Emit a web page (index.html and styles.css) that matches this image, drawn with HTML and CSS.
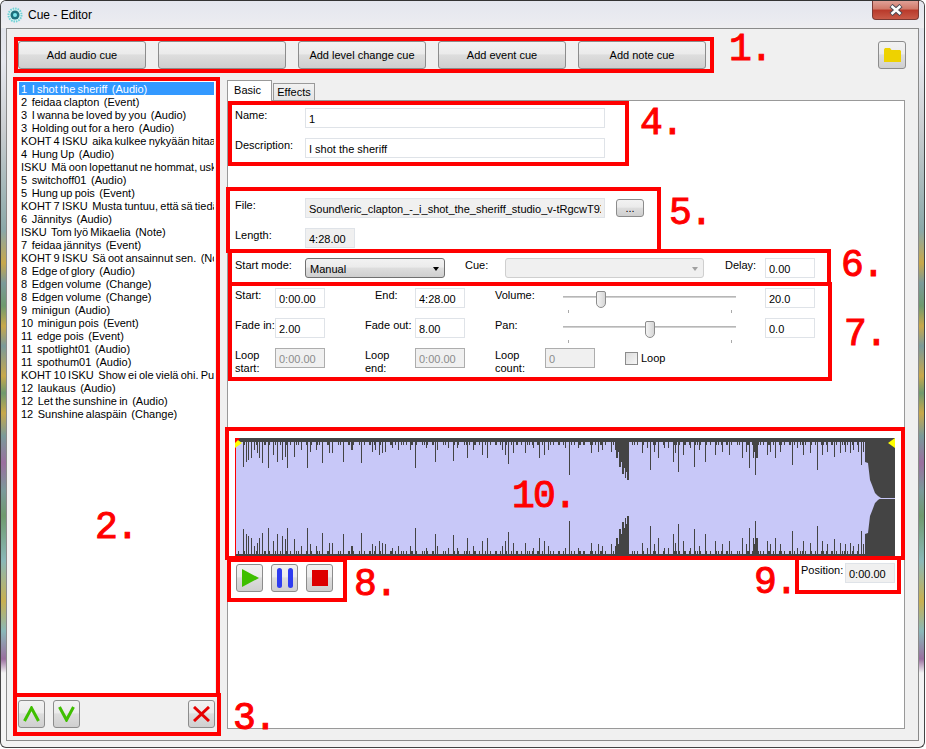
FILE: index.html
```html
<!DOCTYPE html>
<html lang="en">
<head>
  <meta charset="UTF-8">
  <title>Cue - Editor</title>
  <link rel="stylesheet" href="styles.css">
</head>
<body>
<div class="window">
  <div class="titlebar">
    <svg class="app-icon" width="16" height="16" viewBox="0 0 16 16">
      <circle cx="8" cy="8" r="6.5" fill="#d8f4f4" stroke="#6fd0d4" stroke-width="2" stroke-dasharray="1.5 1"/>
      <circle cx="8" cy="8" r="4.5" fill="#1f6f7c"/>
      <circle cx="8" cy="8" r="2" fill="#7fe8ee"/>
    </svg>
    <span class="title-text">Cue - Editor</span>
    <div class="close-btn">
      <svg width="16" height="12" viewBox="0 0 16 12">
        <path d="M3 1.5 13 10.5M13 1.5 3 10.5" stroke="#4a4a55" stroke-width="4.5"/>
        <path d="M3.5 2 12.5 10M12.5 2 3.5 10" stroke="#fff" stroke-width="2.5"/>
      </svg>
    </div>
  </div>

  <div class="client">
    <!-- Toolbar -->
    <div class="toolbar">
      <button class="btn btn-wide">Add audio cue</button>
      <button class="btn btn-wide"></button>
      <button class="btn btn-wide">Add level change cue</button>
      <button class="btn btn-wide">Add event cue</button>
      <button class="btn btn-wide">Add note cue</button>
      <button class="btn btn-folder">
        <svg width="17" height="14" viewBox="0 0 17 14"><path d="M0 1.5 1 0H6L7.5 2H16L17 3V14H0Z" fill="#eed200"/></svg>
      </button>
    </div>

    <div class="main">
      <!-- Cue list -->
      <div class="side">
        <div class="cue-list">
          <div class="cue cue-selected">1  I shot the sheriff  (Audio)</div>
          <div class="cue">2  feidaa clapton  (Event)</div>
          <div class="cue">3  I wanna be loved by you  (Audio)</div>
          <div class="cue">3  Holding out for a hero  (Audio)</div>
          <div class="cue">KOHT 4 ISKU  aika kulkee nykyään hitaammin  (Note)</div>
          <div class="cue">4  Hung Up  (Audio)</div>
          <div class="cue">ISKU  Mä oon lopettanut ne hommat, uskokaa  (Note)</div>
          <div class="cue">5  switchoff01  (Audio)</div>
          <div class="cue">5  Hung up pois  (Event)</div>
          <div class="cue">KOHT 7 ISKU  Musta tuntuu, että sä tiedät  (Note)</div>
          <div class="cue">6  Jännitys  (Audio)</div>
          <div class="cue">ISKU  Tom lyö Mikaelia  (Note)</div>
          <div class="cue">7  feidaa jännitys  (Event)</div>
          <div class="cue">KOHT 9 ISKU  Sä oot ansainnut sen.  (Note)</div>
          <div class="cue">8  Edge of glory  (Audio)</div>
          <div class="cue">8  Edgen volume  (Change)</div>
          <div class="cue">8  Edgen volume  (Change)</div>
          <div class="cue">9  minigun  (Audio)</div>
          <div class="cue">10  minigun pois  (Event)</div>
          <div class="cue">11  edge pois  (Event)</div>
          <div class="cue">11  spotlight01  (Audio)</div>
          <div class="cue">11  spothum01  (Audio)</div>
          <div class="cue">KOHT 10 ISKU  Show ei ole vielä ohi. Pukekaa  (Note)</div>
          <div class="cue">12  laukaus  (Audio)</div>
          <div class="cue">12  Let the sunshine in  (Audio)</div>
          <div class="cue">12  Sunshine alaspäin  (Change)</div>
        </div>
        <div class="list-buttons">
          <button class="btn btn-icon">
            <svg width="17" height="16" viewBox="0 0 17 16"><path d="M1.5 15 8.5 2 15.5 15" fill="none" stroke="#3fbf00" stroke-width="3"/></svg>
          </button>
          <button class="btn btn-icon">
            <svg width="17" height="16" viewBox="0 0 17 16"><path d="M1.5 1 8.5 14 15.5 1" fill="none" stroke="#3fbf00" stroke-width="3"/></svg>
          </button>
          <button class="btn btn-icon btn-delete">
            <svg width="17" height="16" viewBox="0 0 17 16"><path d="M1 1 16 15M16 1 1 15" stroke="#e60000" stroke-width="3"/></svg>
          </button>
        </div>
      </div>

      <!-- Tabs -->
      <div class="tabs">
        <div class="tab-strip">
          <div class="tab tab-active">Basic</div>
          <div class="tab">Effects</div>
        </div>
        <div class="tab-panel">
          <div class="rows rows-basic">
            <div class="row"><label class="lbl lbl-70">Name:</label><input class="field field-300" value="1"></div>
            <div class="row"><label class="lbl lbl-70">Description:</label><input class="field field-300" value="I shot the sheriff"></div>
          </div>

          <div class="rows rows-file">
            <div class="row">
              <label class="lbl lbl-70">File:</label>
              <input class="field field-300 field-ro" readonly value="Sound\eric_clapton_-_i_shot_the_sheriff_studio_v-tRgcwT9XZ.mp3">
              <button class="btn btn-browse">...</button>
            </div>
            <div class="row"><label class="lbl lbl-70">Length:</label><input class="field field-50 field-ro" readonly value="4:28.00"></div>
          </div>

          <div class="row row-start">
            <label class="lbl lbl-70">Start mode:</label>
            <div class="combo combo-mode">Manual</div>
            <label class="lbl lbl-cue">Cue:</label>
            <div class="combo combo-cue"></div>
            <label class="lbl lbl-delay">Delay:</label>
            <input class="field field-50" value="0.00">
          </div>

          <div class="timing">
            <label class="lbl">Start:</label>
            <input class="field" value="0:00.00">
            <label class="lbl col-label2 lbl-end">End:</label>
            <input class="field" value="4:28.00">
            <label class="lbl col-label3">Volume:</label>
            <div class="slider"><span class="thumb thumb-vol"></span></div>
            <input class="field col-value" value="20.0">

            <label class="lbl">Fade in:</label>
            <input class="field" value="2.00">
            <label class="lbl col-label2">Fade out:</label>
            <input class="field" value="8.00">
            <label class="lbl col-label3">Pan:</label>
            <div class="slider"><span class="thumb thumb-pan"></span></div>
            <input class="field col-value" value="0.0">

            <label class="lbl">Loop<br>start:</label>
            <input class="field field-off" disabled value="0:00.00">
            <label class="lbl col-label2">Loop<br>end:</label>
            <input class="field field-off" disabled value="0:00.00">
            <label class="lbl col-label3">Loop<br>count:</label>
            <input class="field field-off" disabled value="0">
            <label class="check"><span class="check-box"></span>Loop</label>
          </div>

          <!-- Waveform -->
          <svg class="wave" width="660" height="119" viewBox="0 0 660 119">
            <defs>
              <g id="half">
                <rect x="0" y="0" width="660" height="4" fill="#444"/>
                <path d="M0 5.5H630" stroke="#444" stroke-width="3" stroke-dasharray="1 2 1 4 2 3 1 5 1 1"/>
                <path d="M380 0V12H381V20H383V14H384V29H386V24H387V36H389V30H390V40H391V34H392V42H394V0ZM518 0V20H519V14H520V37H521V20H523V0ZM630 0V24L633 25 635 42 637 47 640 55 643 58 646 60H660V0Z" fill="#444"/>
                <path fill="none" stroke="#444" d="M8.5 0V29M11.5 0V24M13.5 0V22M16.5 0V20M19.5 0V12M22.5 0V15M24.5 0V20M27.5 0V25M33.5 0V30M38.5 0V17M42.5 0V24M47.5 0V22M50.5 0V19M52.5 0V30M59.5 0V19M66.5 0V12M72.5 0V30M75.5 0V14M81.5 0V12M87.5 0V25M94.5 0V15M97.5 0V15M108.5 0V24M116.5 0V12M117.5 0V12M126.5 0V25M137.5 0V14M140.5 0V12M144.5 0V17M147.5 0V15M150.5 0V14M157.5 0V10M163.5 0V12M175.5 0V12M180.5 0V30M191.5 0V10M200.5 0V24M202.5 0V12M213.5 0V10M218.5 0V23M222.5 0V10M232.5 0V20M238.5 0V12M247.5 0V17M252.5 0V20M267.5 0V12M270.5 0V17M273.5 0V26M278.5 0V15M290.5 0V15M298.5 0V10M304.5 0V20M309.5 0V17M313.5 0V12M330.5 0V10M334.5 0V37M343.5 0V10M348.5 0V7M356.5 0V15M363.5 0V14M367.5 0V12M376.5 0V14M407.5 0V15M412.5 0V10M415.5 0V32M419.5 0V14M423.5 0V20M429.5 0V10M433.5 0V10M438.5 0V24M440.5 0V15M443.5 0V34M448.5 0V17M455.5 0V10M459.5 0V29M464.5 0V12M470.5 0V24M480.5 0V17M487.5 0V14M494.5 0V17M507.5 0V20M511.5 0V14M514.5 0V30M532.5 0V17M535.5 0V14M540.5 0V20M545.5 0V14M557.5 0V27M562.5 0V10M568.5 0V17M575.5 0V15M582.5 0V32M587.5 0V17M592.5 0V14M599.5 0V19M605.5 0V15M610.5 0V14M615.5 0V15M618.5 0V12M623.5 0V14M626.5 0V27M628.5 0V14"/>
              </g>
            </defs>
            <use href="#half"/>
            <use href="#half" transform="matrix(1 0 0 -1 0 120)"/>
            <path d="M644 60.5H660" stroke="#c8c8f8"/>
            <path d="M.5 0V119" stroke="#f00"/>
            <path d="M0 0 7 5 0 10Z" fill="#ff0"/>
            <path d="M0 0H5L0 5Z" fill="#f00"/>
            <path d="M653 5 660 0V10Z" fill="#ff0"/>
          </svg>

          <!-- Transport and position -->
          <div class="transport">
            <button class="btn btn-icon btn-play">
              <svg width="17" height="18" viewBox="0 0 17 18"><path d="M0 0 17 9 0 18Z" fill="#3fbf00"/></svg>
            </button>
            <button class="btn btn-icon">
              <svg width="16" height="20" viewBox="0 0 16 20"><rect x="0" width="5" height="20" rx="2.5" fill="#2e3cf0"/><rect x="11" width="5" height="20" rx="2.5" fill="#2e3cf0"/></svg>
            </button>
            <button class="btn btn-icon">
              <svg width="16" height="16" viewBox="0 0 16 16"><rect width="16" height="16" fill="#dd0000"/></svg>
            </button>
            <div class="position">
              <label class="lbl lbl-pos">Position:</label>
              <input class="field field-50 field-ro field-time" readonly value="0:00.00">
            </div>
          </div>
        </div>
      </div>
    </div>
  </div>
</div>

<!-- Red annotations drawn on top of the screenshot -->
<div class="box box-1"></div>
<div class="box box-2"></div>
<div class="box box-3"></div>
<div class="box box-4"></div>
<div class="box box-5"></div>
<div class="box box-6"></div>
<div class="box box-7"></div>
<div class="box box-8"></div>
<div class="box box-9"></div>
<div class="box box-10"></div>
<span class="num num-1">1.</span>
<span class="num num-2">2.</span>
<span class="num num-3">3.</span>
<span class="num num-4">4.</span>
<span class="num num-5">5.</span>
<span class="num num-6">6.</span>
<span class="num num-7">7.</span>
<span class="num num-8">8.</span>
<span class="num num-9">9.</span>
<span class="num num-10">10.</span>
</body>
</html>
```
FILE: styles.css
```css
* {
  box-sizing: border-box;
}

body {
  margin: 0;
  width: 926px;
  height: 749px;
  position: relative;
  overflow: hidden;
  background-color: #fff;
  font-family: "Liberation Sans", Arial, sans-serif;
  font-size: 11px;
  color: #000;
}

/* Window frame, the desktop shows through it as coloured bands */
.window {
  width: 925px;
  height: 748px;
  border: 1px solid #444;
  border-top-color: #333;
  border-radius: 6px;
  display: flex;
  flex-direction: column;
  background: linear-gradient(to bottom,
    #dfe2ea 0, #e6e8ee 60px, #c9cdd0 130px, #8aa8a8 230px, #c8a84a 262px, #7a9a9a 282px,
    #6f9a6e 305px, #c8a84a 325px, #7a9a9a 345px, #c8a84a 375px, #6f9a6e 392px, #c8a84a 412px,
    #7a9a9a 435px, #9a6f9f 462px, #7a9a9a 490px, #6f9a6e 515px, #8ab8b8 560px, #c8b050 600px,
    #8ab8b8 630px, #9a6f9f 658px, #f3f3f3 672px, #f3f3f3 100%);
}

.titlebar {
  height: 27px;
  flex-shrink: 0;
  display: flex;
  align-items: flex-start;
  padding-left: 6px;
  background: linear-gradient(to bottom, #e4e6ee, #eaebf0 70%, #eeeef0);
  border-radius: 5px 5px 0 0;
}

.app-icon {
  margin-top: 6px;
}

.title-text {
  margin-left: 5px;
  margin-top: 7px;
  font-size: 12px;
  line-height: 14px;
}

.close-btn {
  width: 47px;
  height: 19px;
  margin-left: auto;
  margin-right: 5px;
  display: flex;
  align-items: center;
  justify-content: center;
  border: 1px solid #7a3a34;
  border-top: none;
  border-radius: 0 0 4px 4px;
  background: linear-gradient(to bottom, #e0a096, #d07868 45%, #b8392a 50%, #c85a48);
}

.client {
  margin: 0 5px;
  width: 913px;
  height: 713px;
  border: 1px solid #8a8a8a;
  background-color: #f0f0f0;
  padding: 12px 12px 0 11px;
}

.toolbar {
  display: flex;
  gap: 12px;
}

.btn {
  height: 28px;
  padding: 0;
  border: 1px solid #8c8c8c;
  border-radius: 3px;
  background: linear-gradient(to bottom, #f2f2f2, #ebebeb 45%, #dddddd 50%, #cfcfcf);
  font-family: inherit;
  font-size: 11px;
  color: #000;
  display: flex;
  align-items: center;
  justify-content: center;
}

.btn-wide {
  width: 128px;
}

.btn-icon {
  width: 27px;
}

.btn-play {
  padding-left: 2px;
}

.btn-folder {
  width: 28px;
  margin-left: auto;
}

.main {
  display: flex;
  gap: 12px;
  margin-top: 11px;
}

/* Cue list */
.side {
  width: 197px;
  height: 648px;
  padding-top: 1px;
  display: flex;
  flex-direction: column;
}

.cue-list {
  flex: 1;
  background-color: #fff;
  padding: 1px;
  overflow: hidden;
}

.cue {
  height: 13px;
  line-height: 15px;
  padding-left: 2px;
  word-spacing: -0.8px;
  white-space: pre;
  overflow: hidden;
}

.cue-selected {
  background-color: #3399ff;
  color: #fff;
}

.list-buttons {
  display: flex;
  gap: 8px;
  margin-top: 5px;
}

.btn-delete {
  margin-left: auto;
}

/* Tabs */
.tabs {
  width: 678px;
}

.tab-strip {
  display: flex;
  align-items: flex-end;
  height: 20px;
}

.tab {
  height: 17px;
  width: 42px;
  margin-left: 1px;
  border: 1px solid #999;
  border-bottom: none;
  background: linear-gradient(to bottom, #f2f2f2, #e4e4e4);
  line-height: 16px;
  text-align: center;
}

.tab-active {
  height: 21px;
  width: 45px;
  margin-left: 0;
  margin-bottom: -1px;
  padding-right: 4px;
  background: #fff;
  position: relative;
  line-height: 18px;
}

.tab-panel {
  height: 629px;
  border: 1px solid #999;
  background-color: #fff;
  padding: 7px 0 0 7px;
}

.rows {
  display: flex;
  flex-direction: column;
  gap: 10px;
}

.rows-file {
  margin-top: 40px;
}

.row {
  display: flex;
  align-items: flex-start;
}

.row-start {
  margin-top: 10px;
}

.lbl {
  padding-top: 1px;
  line-height: 13px;
  white-space: nowrap;
}

.lbl-70 {
  width: 70px;
}

.lbl-cue {
  width: 40px;
  margin-left: 20px;
}

.lbl-delay {
  width: 40px;
  margin-left: 21px;
}

.field {
  width: 100%;
  height: 20px;
  padding: 1px 3px 0;
  border: 1px solid #dfe3e8;
  background-color: #fff;
  font-family: inherit;
  font-size: 11px;
  color: #000;
  outline: none;
}

.field-300 {
  width: 300px;
}

.field-50 {
  width: 50px;
}

.field-ro {
  background-color: #f0f0f0;
}

.field-off {
  background-color: #f0f0f0;
  border-color: #adadad;
  color: #8c8c8c;
}

.btn-browse {
  width: 28px;
  height: 18px;
  margin: 1px 0 0 11px;
}

.combo {
  height: 20px;
  line-height: 20px;
  padding-left: 4px;
  border: 1px solid #707070;
  border-radius: 3px;
  background: linear-gradient(to bottom, #f2f2f2, #ebebeb 45%, #dddddd 50%, #cfcfcf);
  position: relative;
}

.combo::after {
  content: "";
  position: absolute;
  right: 5px;
  top: 8px;
  border: 4px solid transparent;
  border-top: 4px solid #000;
  border-left-width: 3.5px;
  border-right-width: 3.5px;
}

.combo-mode {
  width: 140px;
}

.combo-cue {
  width: 199px;
  border-color: #cfcfcf;
  background: #f0f0f0;
}

.combo-cue::after {
  border-top-color: #a0a0a0;
}

/* Start, end, volume and pan grid */
.timing {
  margin-top: 10px;
  display: grid;
  grid-template-columns: 40px 50px 40px 50px 50px 30px 50px 50px 30px 111px 29px 50px;
  grid-auto-rows: 20px;
  row-gap: 10px;
}

.col-label2 {
  grid-column: 4;
}

.col-label3 {
  grid-column: 7;
}

.col-value {
  grid-column: 12;
}

.lbl-end {
  padding-left: 10px;
}

.slider {
  grid-column: 8 / 12;
  margin-left: 18px;
  margin-right: 29px;
  height: 20px;
  position: relative;
  background: linear-gradient(#aaa, #ddd) 0 8px / 100% 2px no-repeat;
}

.slider::before,
.slider::after {
  content: "";
  position: absolute;
  top: 22px;
  width: 1px;
  height: 3px;
  background-color: #aaa;
}

.slider::before {
  left: 5px;
}

.slider::after {
  right: 4px;
}

.thumb {
  position: absolute;
  top: 3px;
  width: 10px;
  height: 17px;
  border: 1px solid #8c8c8c;
  border-radius: 2px 2px 5px 5px;
  background: linear-gradient(to right, #f4f4f4, #d6d6d6);
}

.thumb-vol {
  left: 33px;
}

.thumb-pan {
  left: 82px;
}

.check {
  grid-column: 10;
  display: flex;
  align-items: center;
  gap: 3px;
}

.check-box {
  width: 13px;
  height: 13px;
  border: 1px solid #8c8c8c;
  background: linear-gradient(135deg, #dcdcdc, #f6f6f6);
}

/* Waveform */
.wave {
  display: block;
  margin-top: 70px;
  background-color: #c8c8f8;
}

.transport {
  display: flex;
  gap: 8px;
  margin: 7px 0 0 1px;
}

.position {
  display: flex;
  margin-left: 460px;
  margin-top: -1px;
}

.lbl-pos {
  width: 44px;
}

/* Red annotation boxes */
.box {
  position: absolute;
  border: 4px solid #f00;
}

.box-1 { left: 14px; top: 37px; width: 700px; height: 36px; }
.box-2 { left: 13px; top: 77px; width: 207px; height: 620px; }
.box-3 { left: 13px; top: 693px; width: 208px; height: 43px; }
.box-4 { left: 228px; top: 101px; width: 401px; height: 65px; }
.box-5 { left: 226px; top: 187px; width: 435px; height: 66px; }
.box-6 { left: 228px; top: 249px; width: 603px; height: 37px; }
.box-7 { left: 228px; top: 282px; width: 604px; height: 99px; }
.box-8 { left: 227px; top: 558px; width: 120px; height: 44px; }
.box-9 { left: 795px; top: 556px; width: 106px; height: 38px; }
.box-10 { left: 225px; top: 427px; width: 680px; height: 133px; }

/* Red annotation numbers */
.num {
  position: absolute;
  font-family: "Liberation Mono", monospace;
  font-size: 38px;
  line-height: 38px;
  letter-spacing: -1.8px;
  -webkit-text-stroke: 1px #f00;
  color: #f00;
}

.num-1 { left: 729px; top: 31px; }
.num-2 { left: 95px; top: 509px; }
.num-3 { left: 233px; top: 700px; }
.num-4 { left: 640px; top: 105px; }
.num-5 { left: 669px; top: 195px; }
.num-6 { left: 841px; top: 247px; }
.num-7 { left: 844px; top: 316px; }
.num-8 { left: 354px; top: 566px; }
.num-9 { left: 754px; top: 564px; }
.num-10 { left: 512px; top: 478px; }
```
